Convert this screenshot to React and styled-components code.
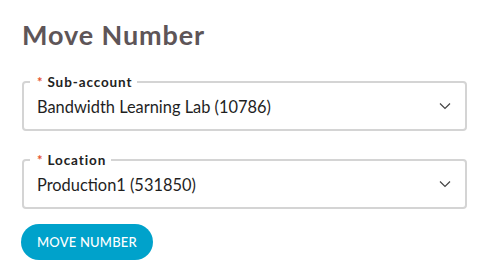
import React from "react";
import styled, { createGlobalStyle } from "styled-components";

const Global = createGlobalStyle`
  html, body { margin: 0; padding: 0; background: #fff; }
  body { font-family: "Lato", "Liberation Sans", sans-serif; }
`;

const Page = styled.div`
  width: 488px;
  height: 280px;
  box-sizing: border-box;
  padding: 19px 21px 0 22px;
  display: flex;
  flex-direction: column;
`;

const Title = styled.h1`
  margin: 0 0 24px;
  font-size: 27px;
  line-height: 32px;
  font-weight: 700;
  letter-spacing: 0.9px;
  color: #5e5558;
`;

const Form = styled.div`
  display: flex;
  flex-direction: column;
  align-items: stretch;
`;

const Field = styled.fieldset`
  margin: 0 0 22px;
  padding: 0 6px;
  border: 2px solid #d4d4d4;
  border-radius: 4px;
  min-width: 0;
`;

const Legend = styled.legend`
  padding: 0 5px 0 7px;
  font-size: 13.5px;
  line-height: 14px;
  font-weight: 700;
  letter-spacing: 0.9px;
  color: #222;
`;

const Star = styled.span`
  color: #e5532f;
  margin-right: 4px;
  font-size: 13px;
`;

const Row = styled.div`
  height: 40px;
  display: flex;
  align-items: center;
  justify-content: space-between;
  padding: 0 8px 0 7px;
`;

const Value = styled.span`
  font-size: 16.4px;
  color: #1f1f1f;
  margin-top: -5px;
`;

const Chevron = styled.svg`
  width: 12px;
  height: 8px;
  margin-top: -6px;
`;

const Button = styled.button`
  align-self: flex-start;
  margin-top: -7px;
  margin-left: -1px;
  height: 36px;
  padding: 0 16px;
  border: none;
  border-radius: 18px;
  background: #00a2cb;
  color: #fff;
  font-family: "Lato", "Liberation Sans", sans-serif;
  font-size: 13px;
  font-weight: 500;
  letter-spacing: 0.2px;
`;

const Select = ({ label, value }) => (
  <Field>
    <Legend>
      <Star>*</Star>
      {label}
    </Legend>
    <Row>
      <Value>{value}</Value>
      <Chevron viewBox="0 0 12 8">
        <path d="M1 1.5 L6 6.5 L11 1.5" fill="none" stroke="#444" strokeWidth="1.2" />
      </Chevron>
    </Row>
  </Field>
);

export default function App() {
  return (
    <>
      <Global />
      <Page>
        <Title>Move Number</Title>
        <Form>
          <Select label="Sub-account" value="Bandwidth Learning Lab (10786)" />
          <Select label="Location" value="Production1 (531850)" />
          <Button>MOVE NUMBER</Button>
        </Form>
      </Page>
    </>
  );
}
